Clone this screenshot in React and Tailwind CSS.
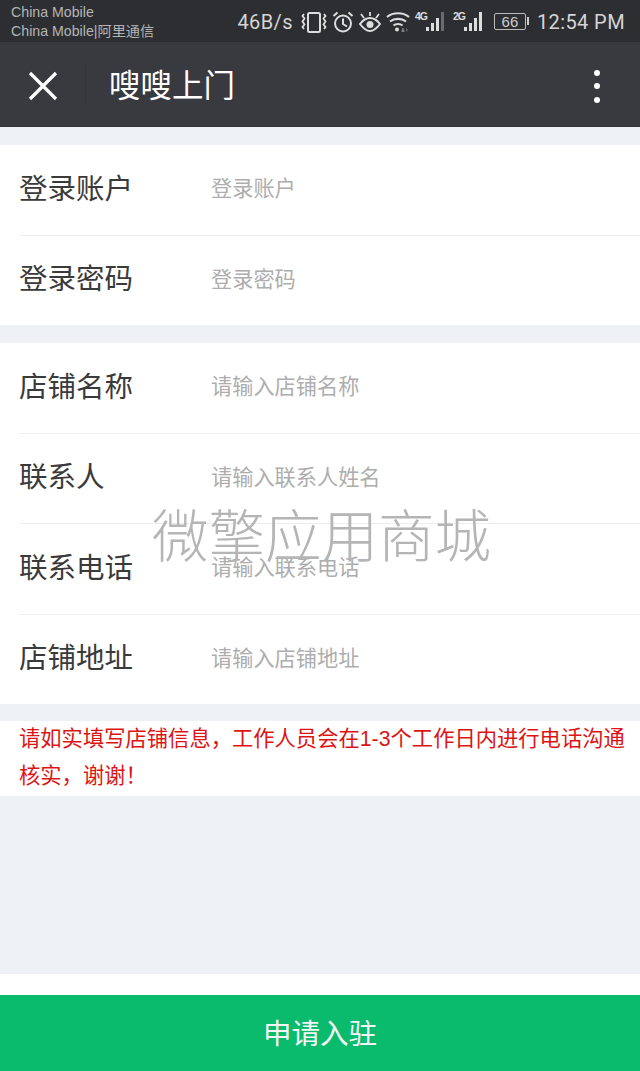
const cjk = "font-['Liberation_Sans','Noto_Sans_CJK_SC',sans-serif]";

function Field({ label, placeholder, rowClass }) {
	return (
		<div className="pl-5">
			<div className={`flex items-center pb-[2px] ${rowClass}`}>
				<div className="w-[192px] -ml-px text-[28.5px] text-[#3a3a3a] leading-none">{label}</div>
				<div className="text-[21.2px] text-[#adadad] leading-none">{placeholder}</div>
			</div>
		</div>
	);
}

function Signal({ label, dim, className }) {
	return (
		<div className={`relative w-[32px] h-[30px] ${className}`}>
			<span className="absolute left-0 top-[10px] text-[10.5px] font-bold leading-[11px] tracking-[-1px] text-[#ddd]">{label}</span>
			<svg width="32" height="30" viewBox="0 0 32 30" className="absolute left-0 top-0">
				<rect x="11" y="26" width="3" height="4" fill="#ddd" />
				<rect x="16" y="22" width="3" height="8" fill="#ddd" />
				<rect x="21" y="17" width="3" height="13" fill="#ddd" />
				<rect x="26" y="11" width="3" height="19" fill={dim ? "#6a6b6e" : "#ddd"} />
			</svg>
		</div>
	);
}

function StatusIcons() {
	return (
		<div className="flex items-center text-[#ddd]">
			{/* vibrate */}
			<svg width="26" height="22" viewBox="0 0 26 22" fill="none" stroke="#ddd" strokeWidth="2">
				<rect x="7" y="2" width="12" height="19" rx="1.500" />
				<path d="M3 3l-1.500 2 2 2.500-2 3 2 3-2 2.500 1.500 2M23 3l1.500 2-2 2.500 2 3-2 3 2 2.500-1.500 2" strokeWidth="1.800" />
			</svg>
			{/* alarm */}
			<svg width="22" height="22" viewBox="0 0 22 22" fill="none" stroke="#ddd" strokeWidth="2" className="ml-[5px]">
				<circle cx="11" cy="12.500" r="8" />
				<path d="M11 7.500v5.500l4 2.500M1.500 5l4-3.500M20.500 5l-4-3.500" />
			</svg>
			{/* eye */}
			<svg width="24" height="22" viewBox="0 0 24 22" fill="none" stroke="#ddd" strokeWidth="2" className="ml-[4px]">
				<path d="M2 13c3-4 6-6 10-6s7 2 10 6c-3 4-6 7-10 7s-7-3-10-7z" />
				<circle cx="12" cy="13.500" r="3.500" fill="#ddd" stroke="none" />
				<path d="M3 3l3 4M21 3l-3 4M12 1v4" strokeWidth="1.800" />
			</svg>
			{/* wifi */}
			<svg width="24" height="22" viewBox="0 0 24 22" fill="none" stroke="#ddd" strokeWidth="2.200" className="ml-[4px]">
				<path d="M1 6c6-5 16-5 22 0M4 10.500c4.500-3.500 11.500-3.500 16 0M7.500 14.500c2.500-2 6.500-2 9 0" />
				<circle cx="11" cy="18.500" r="2" fill="#ddd" stroke="none" />
				<path d="M15.500 20h3M17 17v4" stroke="#999" strokeWidth="1.200" />
				<path d="M20 17l2 2-2 2z" fill="#666" stroke="none" />
			</svg>
			<Signal label="4G" dim className="ml-[5px] -mt-[13px]" />
			<Signal label="2G" className="ml-[6px] -mt-[13px]" />
			{/* battery */}
			<div className="ml-[9px] flex items-center -mt-[2px]">
				<div className="w-[32px] h-[17px] border border-[#bbb] rounded-[2px] flex items-center justify-center text-[15px] leading-none text-[#ccc]">66</div>
				<div className="w-[2px] h-[8px] bg-[#ccc] ml-px" />
			</div>
		</div>
	);
}

export default function App() {
	return (
		<div className={`w-[640px] h-[1071px] relative flex flex-col overflow-hidden bg-[#eef2f6] ${cjk}`}>
			{/* status bar */}
			<div className="h-[42px] shrink-0 bg-[#2d2e32] flex items-center justify-between pl-[11px] pr-[15px]">
				<div className="text-[14.2px] leading-[19px] text-[#b4b4b6] pt-[2px]">
					<div>China Mobile</div>
					<div>China Mobile|阿里通信</div>
				</div>
				<div className="flex items-center pt-[2px]">
					<span className="text-[20px] text-[#d5d5d6] mr-[8px] font-['Roboto',sans-serif] tracking-[0.4px]">46B/s</span>
					<StatusIcons />
					<span className="text-[20px] text-[#d5d5d6] ml-[8px] font-['Roboto',sans-serif] tracking-[0.4px]">12:54 PM</span>
				</div>
			</div>

			{/* nav */}
			<div className="h-[85px] pt-[4px] bg-[#393a3f] flex items-center shrink-0 border-b border-[#2f3034]">
				<svg width="30" height="30" viewBox="0 0 30 30" className="ml-[28px]" stroke="#fff" strokeWidth="3.2" fill="none">
					<path d="M2 2l26 26M28 2L2 28" />
				</svg>
				<div className="w-px h-[42px] bg-[#333438] ml-[27px] -mt-[2px]" />
				<div className="ml-[23px] mt-[2px] text-[31.500px] text-white leading-none">嗖嗖上门</div>
				<div className="ml-auto mr-[40px] flex flex-col gap-[7.500px]">
					<span className="w-[6px] h-[6px] rounded-full bg-white" />
					<span className="w-[6px] h-[6px] rounded-full bg-white" />
					<span className="w-[6px] h-[6px] rounded-full bg-white" />
				</div>
			</div>

			<div className="mt-[18px] bg-white">
				<Field label="登录账户" placeholder="登录账户" rowClass="h-[91px] border-b border-[#eceded]" />
				<Field label="登录密码" placeholder="登录密码" rowClass="h-[89px]" />
			</div>

			<div className="mt-[18px] bg-white">
				<Field label="店铺名称" placeholder="请输入店铺名称" rowClass="h-[91px] border-b border-[#eceded]" />
				<Field label="联系人" placeholder="请输入联系人姓名" rowClass="h-[90px] border-b border-[#eceded]" />
				<Field label="联系电话" placeholder="请输入联系电话" rowClass="h-[91px] border-b border-[#eceded]" />
				<Field label="店铺地址" placeholder="请输入店铺地址" rowClass="h-[89px]" />
			</div>

			<div className="mt-[17px] bg-white h-[75px] pl-[19px] pr-[10px] text-[21.3px] leading-[37px] text-[#dd1414]">
				请如实填写店铺信息，工作人员会在1-3个工作日内进行电话沟通核实，谢谢！
			</div>

			<div className="mt-auto bg-white pt-[21px]">
				<div className="h-[76px] pt-[2px] bg-[#0abb6e] flex items-center justify-center text-[28.5px] text-[#f4f4f4]">申请入驻</div>
			</div>

			{/* watermark */}
			<div className="absolute left-[152px] top-[507px] text-[56.500px] leading-[62px] whitespace-nowrap text-[#b5b5b5] font-light">微擎应用商城</div>
		</div>
	);
}
